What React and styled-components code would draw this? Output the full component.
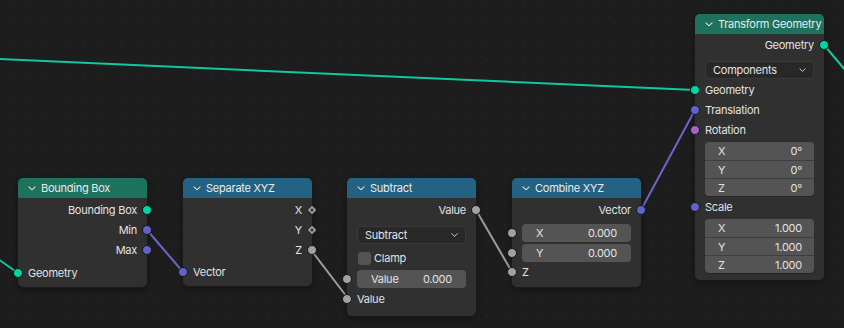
import React from 'react'
import styled, { createGlobalStyle } from 'styled-components'

const colors = {
  bg: '#1d1d1d',
  body: '#303030',
  geoHeader: '#1d725e',
  vecHeader: '#246283',
  text: '#e2e2e2',
  field: '#545454',
  geometry: '#00d6a3',
  vector: '#6363c7',
  rotation: '#a663c7',
  float: '#a1a1a1',
}

const Global = createGlobalStyle`
  html, body { margin: 0; padding: 0; background: ${colors.bg}; }
  body { font-family: Inter, "Noto Sans", "DejaVu Sans", sans-serif; }
`

const Canvas = styled.div`
  position: relative;
  width: 844px;
  height: 328px;
  overflow: hidden;
  background-color: ${colors.bg};
  background-image: radial-gradient(circle, #242424 0.9px, transparent 1.3px);
  background-size: 18.3px 18.3px;
  background-position: 2px -4px;
  font-size: 11px;
  letter-spacing: -0.25px;
  color: ${colors.text};
  white-space: nowrap;
`

const Links = styled.svg`
  position: absolute;
  left: 0;
  top: 0;
  width: 844px;
  height: 328px;
`

const NodeBox = styled.div`
  position: absolute;
  left: ${p => p.x}px;
  top: ${p => p.y}px;
  width: 129px;
  background: ${colors.body};
  border-radius: 5px;
  box-shadow: 0 0 0 1px #1a1a1a, 0 2px 6px rgba(0, 0, 0, 0.45);
  padding-bottom: ${p => p.pb}px;
`

const Header = styled.div`
  height: 20px;
  display: flex;
  align-items: center;
  gap: 5px;
  padding-left: 10px;
  background: ${p => p.color};
  border-radius: 5px 5px 0 0;
  color: #eaeaea;
`

const Body = styled.div`
  display: flex;
  flex-direction: column;
  padding-top: ${p => p.pt ?? 2}px;
`

const Row = styled.div`
  position: relative;
  height: 20px;
  display: flex;
  align-items: center;
  justify-content: ${p => (p.out ? 'flex-end' : 'flex-start')};
  padding: 0 10px;
  margin-top: ${p => p.mt || 0}px;
`

const Socket = styled.span`
  position: absolute;
  top: 50%;
  ${p => (p.out ? 'right: -5px;' : 'left: -5px;')}
  width: 8px;
  height: 8px;
  margin-top: -5px;
  border-radius: 50%;
  background: ${p => p.color};
  border: 1px solid #161616;
`

const DiamondWrap = styled.span`
  position: absolute;
  top: 50%;
  right: -6px;
  margin-top: -6px;
  width: 12px;
  height: 12px;
  display: flex;
`

const Dropdown = styled.div`
  margin: ${p => p.mt}px 10px 0 10px;
  height: 18px;
  box-sizing: border-box;
  display: flex;
  align-items: center;
  justify-content: space-between;
  padding: 0 7px;
  background: #282828;
  border: 1px solid #3a3a3a;
  border-radius: 4px;
`

const CheckRow = styled.div`
  height: 20px;
  margin-top: 4px;
  display: flex;
  align-items: center;
  gap: 3px;
  padding: 0 11px;
`

const Check = styled.span`
  width: 13px;
  height: 13px;
  border-radius: 3px;
  background: ${colors.field};
`

const FieldRow = styled.div`
  position: relative;
  margin: ${p => p.mt || 0}px 10px 0 10px;
`

const Field = styled.div`
  height: 18px;
  display: flex;
  align-items: center;
  justify-content: space-between;
  padding: 0 14px;
  background: ${colors.field};
  border-radius: 4px;
`

const FieldSocket = styled(Socket)`
  left: -15px;
`

const Stack = styled.div`
  margin: 2px 10px 0 10px;
  border-radius: 4px;
  overflow: hidden;
  background: ${colors.field};
  box-shadow: 0 1px 0 #262626;
`

const StackItem = styled.div`
  height: 18px;
  box-sizing: border-box;
  display: flex;
  align-items: center;
  justify-content: space-between;
  padding: 0 12px 0 13px;
  border-top: ${p => (p.first ? 'none' : '1px solid #3e3e3e')};
`

const Chevron = ({ size = 8, color = '#dcdcdc' }) => (
  <svg width={size} height={size * 0.6} viewBox="0 0 8 5" style={{ flexShrink: 0 }}>
    <path d="M0.8 0.8 L4 4 L7.2 0.8" fill="none" stroke={color} strokeWidth="1.1" strokeLinecap="round" strokeLinejoin="round" />
  </svg>
)

const Diamond = () => (
  <DiamondWrap>
    <svg width="12" height="12" viewBox="0 0 12 12">
      <path d="M6 1.2 L10.8 6 L6 10.8 L1.2 6 Z" fill={colors.float} stroke="#161616" strokeWidth="1" />
      <circle cx="6" cy="6" r="1.5" fill="#303030" />
    </svg>
  </DiamondWrap>
)

const Out = ({ label, color, diamond }) => (
  <Row out>
    {label}
    {diamond ? <Diamond /> : <Socket out color={color} />}
  </Row>
)

const In = ({ label, color, mt }) => (
  <Row mt={mt}>
    <Socket color={color} />
    {label}
  </Row>
)

const Node = ({ x, y, title, color, pb, pt, children }) => (
  <NodeBox x={x} y={y} pb={pb}>
    <Header color={color}>
      <Chevron />
      {title}
    </Header>
    <Body pt={pt}>{children}</Body>
  </NodeBox>
)

const VecStack = ({ values }) => (
  <Stack>
    {['X', 'Y', 'Z'].map((axis, i) => (
      <StackItem key={axis} first={i === 0}>
        <span>{axis}</span>
        <span>{values[i]}</span>
      </StackItem>
    ))}
  </Stack>
)

export default function App() {
  return (
    <Canvas>
      <Global />
      <Links viewBox="0 0 844 328">
        <g fill="none" strokeWidth="2" strokeLinecap="round">
          <line x1="-2" y1="59" x2="695" y2="90" stroke="#10c99c" />
          <line x1="824" y1="45" x2="846" y2="71" stroke="#10c99c" />
          <line x1="-2" y1="259" x2="18" y2="273" stroke="#10c99c" />
          <line x1="147" y1="230" x2="183" y2="272" stroke="#6a66cc" />
          <line x1="311" y1="250" x2="347" y2="297" stroke="#9c9c9c" />
          <line x1="476" y1="210" x2="512" y2="272" stroke="#9c9c9c" />
          <line x1="641" y1="210" x2="695" y2="110" stroke="#6a66cc" />
        </g>
      </Links>

      <Node x={18} y={178} title="Bounding Box" color={colors.geoHeader} pb={4}>
        <Out label="Bounding Box" color={colors.geometry} />
        <Out label="Min" color={colors.vector} />
        <Out label="Max" color={colors.vector} />
        <In label="Geometry" color={colors.geometry} mt={3} />
      </Node>

      <Node x={183} y={178} title="Separate XYZ" color={colors.vecHeader} pb={4}>
        <Out label="X" diamond />
        <Out label="Y" diamond />
        <Out label="Z" color={colors.float} />
        <In label="Vector" color={colors.vector} mt={2} />
      </Node>

      <Node x={347} y={178} title="Subtract" color={colors.vecHeader} pb={7}>
        <Out label="Value" color={colors.float} />
        <Dropdown mt={6}>
          <span>Subtract</span>
          <Chevron size={7} />
        </Dropdown>
        <CheckRow>
          <Check />
          Clamp
        </CheckRow>
        <FieldRow mt={2}>
          <FieldSocket color={colors.float} />
          <Field>
            <span>Value</span>
            <span>0.000</span>
          </Field>
        </FieldRow>
        <In label="Value" color={colors.float} mt={1} />
      </Node>

      <Node x={512} y={178} title="Combine XYZ" color={colors.vecHeader} pb={5}>
        <Out label="Vector" color={colors.vector} />
        <FieldRow mt={4}>
          <FieldSocket color={colors.float} />
          <Field>
            <span>X</span>
            <span>0.000</span>
          </Field>
        </FieldRow>
        <FieldRow mt={2}>
          <FieldSocket color={colors.float} />
          <Field>
            <span>Y</span>
            <span>0.000</span>
          </Field>
        </FieldRow>
        <In label="Z" color={colors.float} />
      </Node>

      <Node x={695} y={14} title="Transform Geometry" color={colors.geoHeader} pb={7} pt={1}>
        <Out label="Geometry" color={colors.geometry} />
        <Dropdown mt={6}>
          <span>Components</span>
          <Chevron size={7} />
        </Dropdown>
        <In label="Geometry" color={colors.geometry} mt={1} />
        <In label="Translation" color={colors.vector} />
        <In label="Rotation" color={colors.rotation} />
        <VecStack values={['0°', '0°', '0°']} />
        <In label="Scale" color={colors.vector} mt={1} />
        <VecStack values={['1.000', '1.000', '1.000']} />
      </Node>
    </Canvas>
  )
}
